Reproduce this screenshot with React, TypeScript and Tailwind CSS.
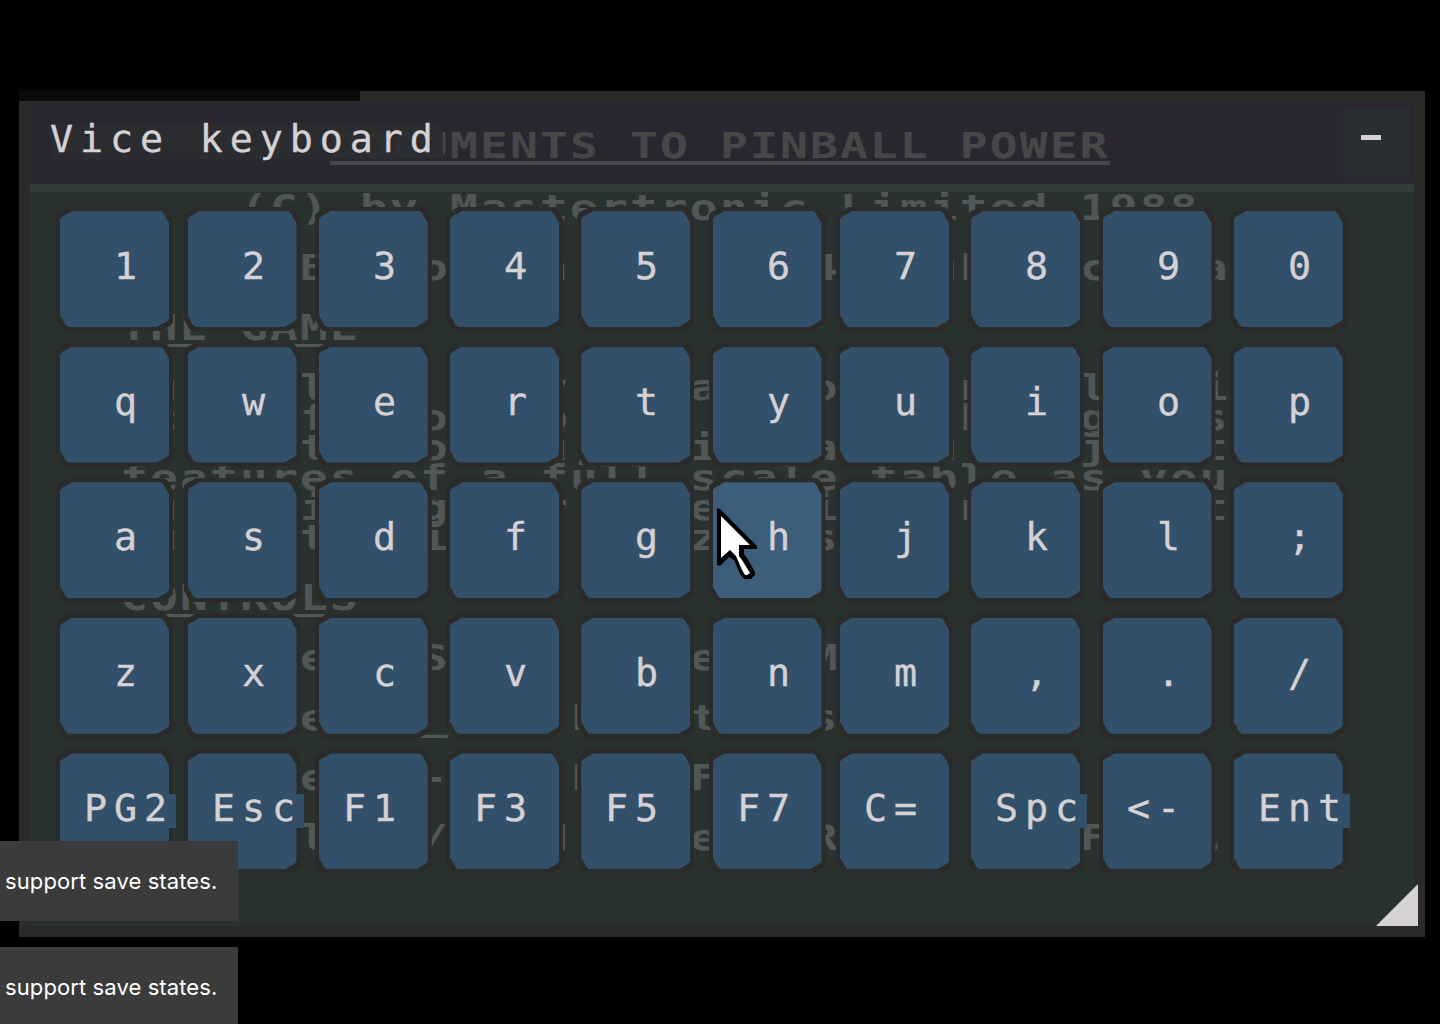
const KEY_ROWS: string[][] = [
  [' 1', ' 2', ' 3', ' 4', ' 5', ' 6', ' 7', ' 8', ' 9', ' 0'],
  [' q', ' w', ' e', ' r', ' t', ' y', ' u', ' i', ' o', ' p'],
  [' a', ' s', ' d', ' f', ' g', ' h', ' j', ' k', ' l', ' ;'],
  [' z', ' x', ' c', ' v', ' b', ' n', ' m', ' ,', ' .', ' /'],
  ['PG2', 'Esc', 'F1', 'F3', 'F5', 'F7', 'C=', 'Spc', '<-', 'Ent'],
];

// Text of the emulated screen, on a 30px character grid.
const SCREEN_LINES: string[] = [
  '    (C) by Mastertronic Limited 1988',
  '',
  '      B   o   n,       4   uh   c   a',
  '',
  'THE GAME',
  '',
  ' u    l       v.   a   o    n   l   i',
  ' c    f   o   p.            h   g   s',
  ' .    t   o   u,   i   a   u    j   t',
  'features of a full scale table as you',
  ' u    i   g   r    e   i    n       t',
  ' u    t   i        z   s',
  '',
  'CONTROLS',
  '',
  " '    e   S   ::   e   M",
  '',
  " '    e   _   .L   t   s",
  '',
  ' :    e   -    L   F',
  '',
  " '    l   /   H'   e   R        F   ,",
];

const HEADINGS = ['THE GAME', 'CONTROLS'];

const KEY_CLIP =
  '[clip-path:polygon(0_8px,3px_5px,7px_3px,12px_0,calc(100%_-_8px)_0,calc(100%_-_5px)_3px,calc(100%_-_3px)_7px,100%_12px,100%_calc(100%_-_8px),calc(100%_-_3px)_calc(100%_-_5px),calc(100%_-_7px)_calc(100%_-_3px),calc(100%_-_12px)_100%,8px_100%,5px_calc(100%_-_3px),3px_calc(100%_-_7px),0_calc(100%_-_12px))]';

const MONO =
  'font-["DejaVu_Sans_Mono",monospace] text-[36.5px] tracking-[6.57px] leading-[30px] whitespace-pre text-[#d5d1d5] origin-left scale-x-[1.05] [-webkit-text-stroke:0.35px_#d5d1d5]';
const SCREEN_FONT =
  'font-["DejaVu_Sans_Mono",monospace] font-bold text-[35px] tracking-[1.65px] leading-[30px] whitespace-pre origin-left scale-x-[1.32]';

function Key({ label }: { label: string }) {
  const fill = label === ' h' ? 'bg-[#3c5e7b]' : 'bg-[#325069]';
  return (
    <div className="grid h-[124px] w-[117px] grid-cols-[117px] grid-rows-[124px]">
      <div className={`col-start-1 row-start-1 bg-[#2b2c29] ${KEY_CLIP}`} />
      <div className={`col-start-1 row-start-1 m-1 ${fill} ${KEY_CLIP}`} />
      <div className="z-10 col-start-1 row-start-1 flex pt-[45px] pl-[28px]">
        <span className={`h-[34px] shrink-0 ${label.length === 3 ? 'w-[92px]' : ''} ${fill}`}>
          <span className={`block ${MONO}`}>{label}</span>
        </span>
      </div>
    </div>
  );
}

function Toast() {
  return (
    <div className="flex h-[80px] w-[238px] items-center bg-[#3b3b3b] pl-[5px] font-[Inter,sans-serif] text-[22px] tracking-[0.1px] whitespace-nowrap text-white">
      support save states.
    </div>
  );
}

function Pointer() {
  return (
    <svg className="absolute top-[508px] left-[716px]" width="42" height="75" viewBox="0 0 42 75">
      <path
        d="M1 0 L4 1 L41 38 V41 H28 V46 L31 50 L39 64 V67 L35 71 H28 L24 66 L18 52 L13 49 L4 58 L1 57 Z"
        fill="#000"
      />
      <path d="M5 8 L34 37 H23 V48 L26 52 L34 65 L31 67 H29 L26 62 L20 48 L14 42 L5 50 Z" fill="#fff" />
    </svg>
  );
}

export default function App() {
  return (
    <div className="relative h-[1024px] w-[1440px] overflow-hidden bg-black pt-[91px] pl-[19px]">
      <div className="isolate h-[846px] w-[1406px] bg-[#2b2c29]">
        <div className="h-[10px] w-[341px] bg-[#0a0a0a]" />
        <div className="mx-[11px] mt-px grid h-[82px] bg-[#2a2731]">
          <div className="col-start-1 row-start-1 mt-[25px] ml-[300px] h-[38px] w-[780px] border-b-4 border-[#484748] text-[#484748]">
            <div className={`pt-[4px] ${SCREEN_FONT}`}>DOCUMENTS TO PINBALL POWER</div>
          </div>
          <div className="z-10 col-start-1 row-start-1 flex items-start justify-between pr-[4px] pl-[20px]">
            <div className="mt-[23px] h-[34px] w-[393px] bg-[#2a2d31]/90">
              <div className={MONO}>Vice keyboard</div>
            </div>
            <div className="mt-[6px] flex h-[69px] w-[67px] justify-center bg-[#2a2d31] pt-[27px]">
              <div className="mr-[12px] h-[5px] w-[20px] bg-[#d5d1d5]" />
            </div>
          </div>
        </div>
        <div className="mx-[11px] h-[8px] bg-[#333c38]" />
        <div className="mx-[11px] grid h-[734px] grid-cols-[1384px] grid-rows-[734px] bg-[#2a322f]">
          <div className="col-start-1 row-start-1 ml-[90px] h-[700px] w-[1200px] overflow-hidden pt-px text-[#505756]">
            {SCREEN_LINES.map((line, i) => (
              <div key={i} className="h-[30px]">
                <div className={`h-[30px] ${SCREEN_FONT}`}>{line}</div>
                {HEADINGS.includes(line) && <div className="mt-px h-[3px] w-[240px] bg-[#505756]" />}
              </div>
            ))}
          </div>
          <div className="z-10 col-start-1 row-start-1 flex flex-col gap-[11.6px] pt-[15px] pl-[26px]">
            {KEY_ROWS.map((row, r) => (
              <div
                key={r}
                className="grid grid-cols-[127.5px_131.25px_131.25px_131.25px_131.25px_127.5px_131.25px_131.25px_131.25px_131.25px]"
              >
                {row.map((label) => (
                  <Key key={label} label={label} />
                ))}
              </div>
            ))}
          </div>
        </div>
      </div>
      <svg className="absolute right-[22px] bottom-[98px]" width="42" height="42" viewBox="0 0 42 42">
        <path d="M42 0V42H0Z" fill="#d5d1d5" />
      </svg>
      <Pointer />
      <div className="absolute top-[841px] left-0 flex flex-col gap-[26px]">
        <Toast />
        <Toast />
      </div>
    </div>
  );
}
